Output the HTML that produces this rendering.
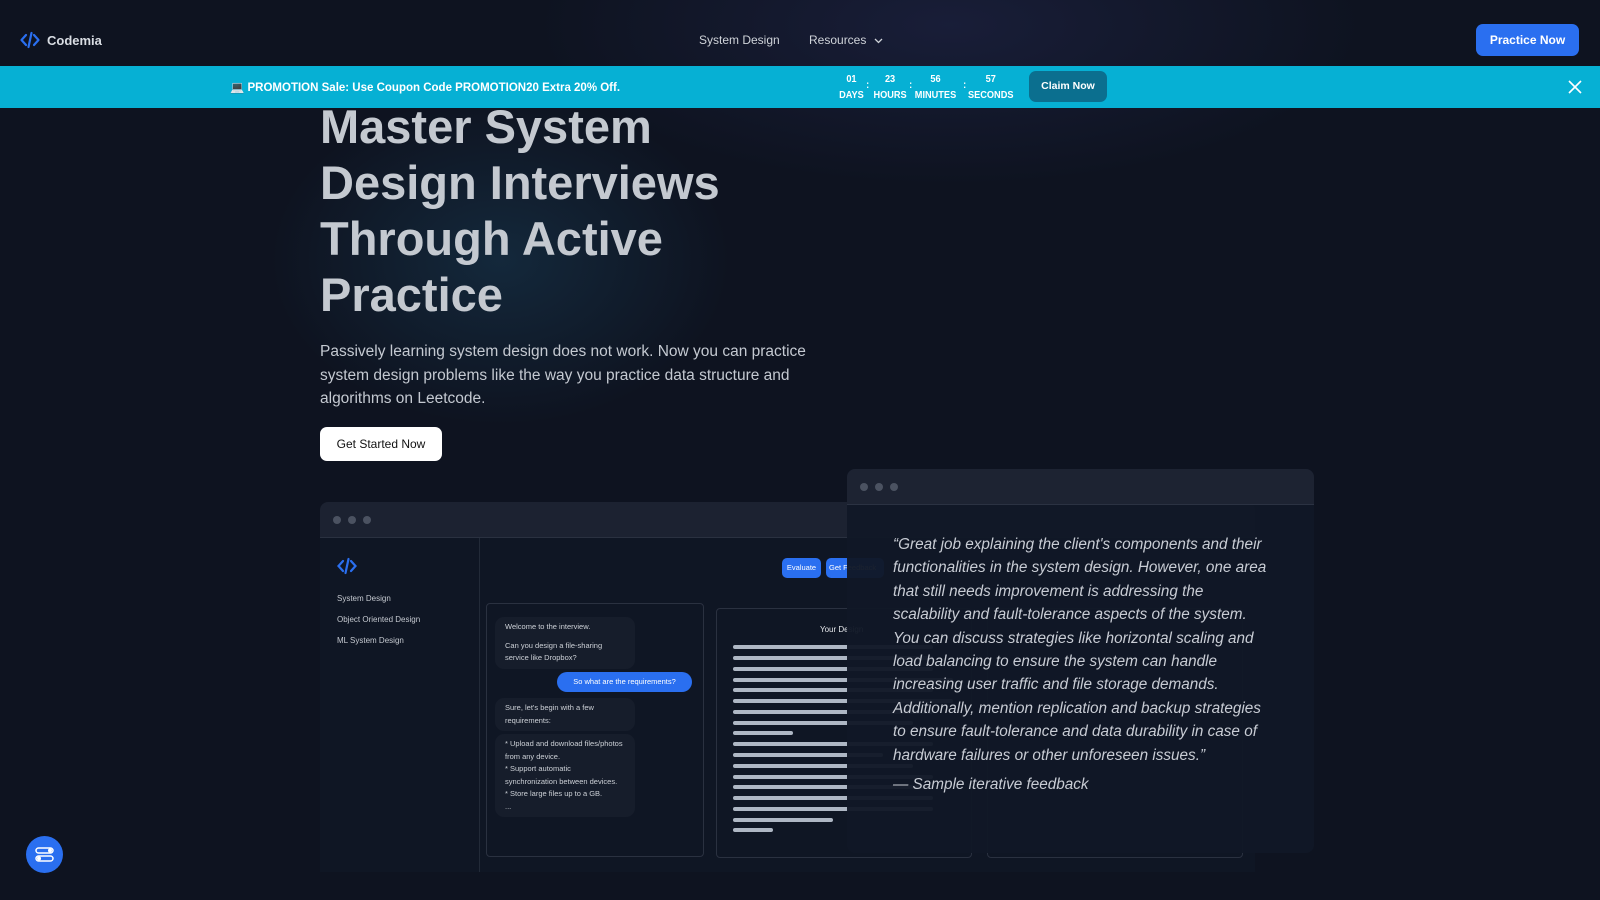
<!DOCTYPE html>
<html><head><meta charset="utf-8"><style>
*{box-sizing:border-box;margin:0;padding:0}
body{width:1600px;height:900px;overflow:hidden;background:#0e1320;font-family:"Liberation Sans",sans-serif;position:relative;color:#d1d5db}
.glow1{position:absolute;left:250px;top:80px;width:500px;height:360px;background:radial-gradient(ellipse at center,rgba(30,80,110,.35),transparent 65%)}
.glow2{position:absolute;left:500px;top:-150px;width:900px;height:350px;background:radial-gradient(ellipse at center,rgba(35,40,80,.5),transparent 65%)}
.nav{position:absolute;top:0;left:0;width:1600px;height:66px}
.logo{position:absolute;left:20px;top:31px;display:flex;align-items:center;gap:7px;font-weight:bold;font-size:13px;color:#d9dde3}
.navl{position:absolute;top:33px;font-size:12px;color:#cfd3d9}
.pn{position:absolute;left:1476px;top:24px;width:103px;height:32px;background:#2a6ff0;border-radius:7px;color:#fff;font-size:12px;font-weight:bold;text-align:center;line-height:32px}
.promo{position:absolute;top:66px;left:0;width:1600px;height:42px;background:#06b0d4;color:#fff;font-weight:bold;font-size:11.5px}
.cd{position:absolute;top:6px;text-align:center;font-size:10px;line-height:16px;transform:scaleX(.92)}
.claim{position:absolute;left:1029px;top:5px;width:78px;height:31px;background:#0b6f8f;border-radius:7px;text-align:center;line-height:31px;font-size:10.5px}
h1{position:absolute;left:320px;top:99px;font-size:47px;line-height:56px;color:#c4c9d0;font-weight:bold;width:460px}
.p{position:absolute;left:320px;top:340px;width:510px;font-size:15.5px;line-height:23.5px;color:#c4c9d1}
.gs{position:absolute;left:320px;top:427px;width:122px;height:34px;background:#fff;border-radius:7px;color:#111;font-size:12px;text-align:center;line-height:34px}
.win{position:absolute;left:320px;top:502px;width:935px;height:370px;background:#0f1624;border-radius:8px 8px 0 0}
.wbar{height:36px;background:#1c2231;border-radius:8px 8px 0 0;border-bottom:1px solid #2a3140}
.dots{position:absolute;left:13px;top:14px;display:flex;gap:7px}
.dots i{width:8px;height:8px;border-radius:50%;background:#4b5261;display:block}
.side{position:absolute;left:0;top:36px;width:160px;bottom:0;border-right:1px solid #222a38}
.si{position:absolute;left:17px;font-size:8px;color:#c5c9d0}
.chat{position:absolute;left:166px;top:101px;width:218px;height:254px;border:1px solid #2a3140;border-radius:4px}
.b{position:absolute;background:#161d2b;border-radius:9px;font-size:7.5px;line-height:12.5px;color:#cdd1d7;padding:4px 10px}
.blue{background:#2a6ff0;color:#fff;border-radius:11px;text-align:center}
.des{position:absolute;left:396px;top:106px;width:256px;height:250px;border:1px solid #2a3140;border-radius:4px}
.ln{position:absolute;left:16px;height:4px;background:#aeb7c4;border-radius:2px}
.over{position:absolute;left:847px;top:469px;width:467px;height:384px;background:rgba(17,24,38,.96);border-radius:8px}
.obar{height:36px;background:#1d2332;border-radius:8px 8px 0 0;border-bottom:1px solid #2b3242;position:relative}
.quote{position:absolute;left:46px;top:64px;width:380px;font-style:italic;font-size:15.3px;line-height:23.4px;color:#c8ccd4}
.fab{position:absolute;left:26px;top:836px;width:37px;height:37px;border-radius:50%;background:#2a6ff0}
</style></head><body>
<div class="glow2"></div><div class="glow1"></div>
<div class="nav">
<div class="logo"><svg width="20" height="18" viewBox="0 0 20 18"><path d="M6 4L1.5 9 6 14M14 4l4.5 5L14 14M11.5 2L8.5 16" stroke="#2a6ff0" stroke-width="2.2" fill="none" stroke-linecap="round" stroke-linejoin="round"/></svg>Codemia</div>
<div class="navl" style="left:699px">System Design</div>
<div class="navl" style="left:809px">Resources <svg width="9" height="6" style="margin-left:4px" viewBox="0 0 9 6"><path d="M1 1l3.5 3.5L8 1" stroke="#cfd3d9" stroke-width="1.3" fill="none"/></svg></div>
<div class="pn">Practice Now</div>
</div>
<div class="promo">
<div style="position:absolute;left:230px;top:14px">💻 PROMOTION Sale: Use Coupon Code PROMOTION20 Extra 20% Off.</div>
<div class="cd" style="left:838px">01<br>DAYS</div>
<div class="cd" style="left:866px;top:12px">:</div>
<div class="cd" style="left:872px">23<br>HOURS</div>
<div class="cd" style="left:909px;top:12px">:</div>
<div class="cd" style="left:913px">56<br>MINUTES</div>
<div class="cd" style="left:963px;top:12px">:</div>
<div class="cd" style="left:966px">57<br>SECONDS</div>
<div class="claim">Claim Now</div>
<svg style="position:absolute;left:1568px;top:14px" width="14" height="14"><path d="M1 1L13 13M13 1L1 13" stroke="#fff" stroke-width="1.6"/></svg>
</div>
<h1>Master System Design Interviews Through Active Practice</h1>
<div class="p">Passively learning system design does not work. Now you can practice system design problems like the way you practice data structure and algorithms on Leetcode.</div>
<div class="gs">Get Started Now</div>
<div class="win"><div class="wbar"><div class="dots"><i></i><i></i><i></i></div></div>
<div class="side">
<svg style="position:absolute;left:17px;top:19px" width="20" height="18" viewBox="0 0 20 18"><path d="M6 4L1.5 9 6 14M14 4l4.5 5L14 14M11.5 2L8.5 16" stroke="#2a6ff0" stroke-width="2.2" fill="none" stroke-linecap="round"/></svg>
<div class="si" style="top:56px">System Design</div>
<div class="si" style="top:77px">Object Oriented Design</div>
<div class="si" style="top:98px">ML System Design</div>
</div>
<div style="position:absolute;left:462px;top:56px;width:39px;height:20px;background:#2a6ff0;border-radius:5px;color:#fff;font-size:7.5px;text-align:center;line-height:20px">Evaluate</div>
<div style="position:absolute;left:506px;top:56px;width:58px;height:20px;background:#2a6ff0;border-radius:5px;color:#fff;font-size:7.5px;line-height:20px;padding-left:3px;white-space:nowrap;overflow:hidden">Get Feedback</div>
<div class="chat">
<div class="b" style="left:8px;top:13px;width:140px">Welcome to the interview.<br><span style="display:block;height:6px"></span>Can you design a file-sharing service like Dropbox?</div>
<div class="b blue" style="left:70px;top:68px;width:135px;height:20px;line-height:12px">So what are the requirements?</div>
<div class="b" style="left:8px;top:94px;width:140px">Sure, let's begin with a few requirements:</div>
<div class="b" style="left:8px;top:130px;width:140px">* Upload and download files/photos from any device.<br>* Support automatic synchronization between devices.<br>* Store large files up to a GB.<br>...</div>
</div>
<div class="des">
<div style="position:absolute;left:103px;top:16px;font-size:8px;color:#e5e7eb">Your Design</div>
<div class="ln" style="top:36px;width:200px"></div><div class="ln" style="top:47px;width:200px"></div><div class="ln" style="top:58px;width:200px"></div><div class="ln" style="top:69px;width:220px"></div><div class="ln" style="top:79px;width:200px"></div><div class="ln" style="top:90px;width:220px"></div><div class="ln" style="top:101px;width:200px"></div><div class="ln" style="top:112px;width:180px"></div><div class="ln" style="top:122px;width:60px"></div><div class="ln" style="top:133px;width:200px"></div><div class="ln" style="top:144px;width:150px"></div><div class="ln" style="top:155px;width:180px"></div><div class="ln" style="top:166px;width:200px"></div><div class="ln" style="top:176px;width:200px"></div><div class="ln" style="top:187px;width:200px"></div><div class="ln" style="top:198px;width:200px"></div><div class="ln" style="top:209px;width:100px"></div><div class="ln" style="top:219px;width:40px"></div>
</div>
<div style="position:absolute;left:667px;top:106px;width:256px;height:250px;border:1px solid #2a3140;border-radius:4px"></div>
</div>
<div class="over"><div class="obar"><div class="dots" style="left:13px;top:14px"><i></i><i></i><i></i></div></div>
<div class="quote">“Great job explaining the client's components and their functionalities in the system design. However, one area that still needs improvement is addressing the scalability and fault-tolerance aspects of the system. You can discuss strategies like horizontal scaling and load balancing to ensure the system can handle increasing user traffic and file storage demands. Additionally, mention replication and backup strategies to ensure fault-tolerance and data durability in case of hardware failures or other unforeseen issues.”<div style="margin-top:6px">— Sample iterative feedback</div></div>
</div>
<div class="fab"><svg width="37" height="37" viewBox="0 0 37 37"><rect x="10" y="12" width="17" height="5" rx="2.5" stroke="#fff" stroke-width="1.5" fill="none"/><rect x="10" y="20" width="17" height="5" rx="2.5" stroke="#fff" stroke-width="1.5" fill="none"/><circle cx="24" cy="14.5" r="2" fill="#fff"/><circle cx="13" cy="22.5" r="2" fill="#fff"/></svg></div>
</body></html>
